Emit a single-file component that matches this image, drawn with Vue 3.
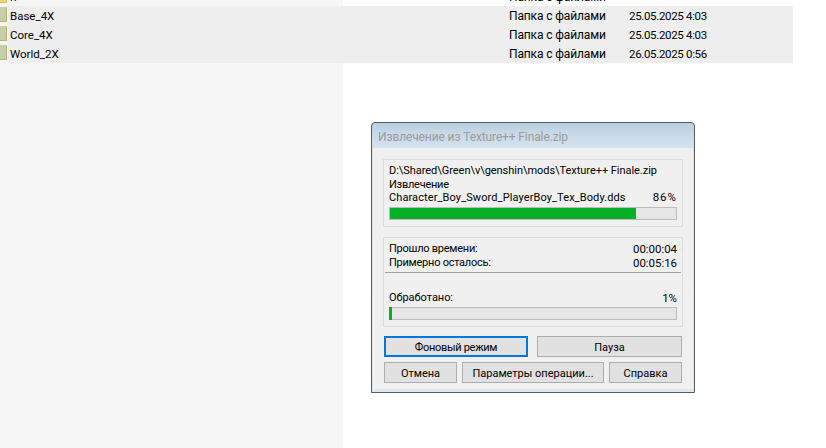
<template>
  <div class="page">
    <div class="list">
      <div class="row">
        <span class="folder folder--open"></span>
        <span class="row__name">н</span>
        <span class="row__type">Папка с файлами</span>
        <span class="row__date"></span>
      </div>
      <div class="row row--picked" v-for="item in folders" :key="item.name">
        <span class="folder"></span>
        <span class="row__name">{{ item.name }}</span>
        <span class="row__type">Папка с файлами</span>
        <span class="row__date">{{ item.date }}</span>
      </div>
    </div>

    <div class="dialog">
      <div class="dialog__title">Извлечение из Texture++ Finale.zip</div>
      <div class="dialog__body">
        <div class="panel panel--top">
          <div class="line">D:\Shared\Green\v\genshin\mods\Texture++ Finale.zip</div>
          <div class="line"><span class="label">Извлечение</span></div>
          <div class="line line--split">
            <span class="filename">Character_Boy_Sword_PlayerBoy_Tex_Body.dds</span>
            <span class="value value--wide">86%</span>
          </div>
          <div class="bar"><div class="bar__fill" :style="{ width: '86%' }"></div></div>
        </div>

        <div class="panel panel--bottom">
          <div class="line line--split">
            <span class="label">Прошло времени:</span>
            <span class="value">00:00:04</span>
          </div>
          <div class="line line--split">
            <span class="label">Примерно осталось:</span>
            <span class="value">00:05:16</span>
          </div>
          <div class="divider"></div>
          <div class="line line--split">
            <span>Обработано:</span>
            <span class="value">1%</span>
          </div>
          <div class="bar"><div class="bar__fill bar__fill--low" :style="{ width: '3px' }"></div></div>
        </div>

        <div class="buttons buttons--two">
          <button class="btn btn--focus">Фоновый режим</button>
          <button class="btn">Пауза</button>
        </div>
        <div class="buttons buttons--three">
          <button class="btn">Отмена</button>
          <button class="btn">Параметры операции...</button>
          <button class="btn">Справка</button>
        </div>
      </div>
    </div>
  </div>
</template>

<script setup>
const folders = [
  { name: "Base_4X", date: "25.05.2025 4:03" },
  { name: "Core_4X", date: "25.05.2025 4:03" },
  { name: "World_2X", date: "26.05.2025 0:56" },
];
</script>

<style>
html,
body {
  margin: 0;
  overflow: hidden;
}
</style>

<style scoped>
.page {
  position: relative;
  width: 826px;
  height: 448px;
  overflow: hidden;
  background: linear-gradient(to right, #f5f5f5 343px, #fff 343px);
  font-family: Roboto, "Noto Sans", sans-serif;
  font-size: 11px;
  color: #000;
}
.list {
  margin-top: -13px;
}
.row {
  display: flex;
  align-items: center;
  height: 19px;
  width: 793px;
  font-size: 12px;
}
.row--picked {
  background: linear-gradient(to right, transparent 8px, #eeeeee 8px);
}
.folder {
  width: 7px;
  height: 15px;
  margin-bottom: 2px;
  box-sizing: border-box;
  background: #c4cfa5;
  border: 1px solid #b8b265;
  border-left: none;
  border-top-color: #c4cfa5;
  border-radius: 0 1px 1px 0;
  flex: none;
}
.folder--open {
  background: #f2d27a;
  border-color: #e4b84f;
}
.row__name {
  margin-left: 3px;
  width: 499px;
  font-size: 11.5px;
}
.row__type {
  width: 120px;
  letter-spacing: -0.13px;
}
.row__date {
  font-size: 11.5px;
  letter-spacing: -0.33px;
}
.dialog {
  position: absolute;
  left: 371px;
  top: 122px;
  width: 324px;
  height: 271px;
  box-sizing: border-box;
  display: flex;
  flex-direction: column;
  border: 1px solid #5a5a5a;
  border-radius: 4px 4px 0 0;
  background: linear-gradient(to bottom, #bccfe0, #d6e4f1 26px, #dce9f5);
  padding: 0 1px 3px;
}
.dialog__title {
  height: 25px;
  line-height: 28px;
  padding-left: 5px;
  color: #9b9b9b;
  font-size: 12px;
  letter-spacing: -0.12px;
  white-space: nowrap;
}
.dialog__body {
  flex: 1;
  background: #f0f0f0;
  padding: 11px 10px 0;
  display: flex;
  flex-direction: column;
}
.panel {
  box-sizing: border-box;
  border: 1px solid #dcdcdc;
  padding: 0 5px;
}
.panel--top {
  height: 68px;
  padding-top: 4px;
}
.panel--bottom {
  height: 90px;
  margin-top: 10px;
  padding-top: 4px;
}
.line {
  height: 14px;
  line-height: 14px;
  letter-spacing: -0.04px;
  white-space: nowrap;
}
.panel--top .line {
  height: 13.5px;
  line-height: 13.5px;
}
.line--split {
  display: flex;
  justify-content: space-between;
}
.label {
  letter-spacing: -0.25px;
}
.filename {
  letter-spacing: 0.1px;
}
.value {
  font-size: 11.5px;
}
.value--wide {
  letter-spacing: 1px;
}
.bar {
  height: 13px;
  margin-top: 2.5px;
  box-sizing: border-box;
  border: 1px solid #bcbcbc;
  background: #e6e6e6;
}
.panel--bottom .bar {
  margin-top: 2px;
}
.bar__fill {
  height: 100%;
  background: #06b025;
}
.bar__fill--low {
  height: calc(100% + 2px);
  margin: -1px 0 0 -1px;
}
.divider {
  height: 1px;
  margin: 2px -4px 18px;
  background: #a0a0a0;
}
.buttons {
  display: grid;
  margin-left: 1px;
  margin-right: 1px;
}
.buttons--two {
  grid-template-columns: 144px 145px;
  column-gap: 9px;
  margin-top: 9px;
}
.buttons--three {
  grid-template-columns: 73px 142px 73px;
  column-gap: 5px;
  margin-top: 5px;
}
.btn {
  height: 21px;
  padding: 2px 0 0;
  box-sizing: border-box;
  border: 1px solid #adadad;
  background: #e1e1e1;
  font: inherit;
  color: #000;
}
.btn--focus {
  border: 2px solid #0078d7;
  letter-spacing: -0.3px;
}
</style>
